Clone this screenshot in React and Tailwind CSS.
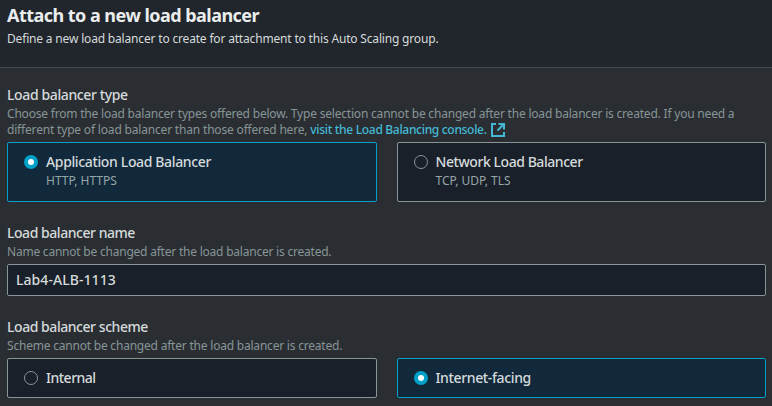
function Radio({ checked }) {
  return checked ? (
    <span className="mt-1 flex size-3.5 shrink-0 items-center justify-center rounded-full bg-[#00a1c9]">
      <span className="size-1.5 rounded-full bg-white" />
    </span>
  ) : (
    <span className="mt-1 size-3.5 shrink-0 rounded-full border border-[#879596] bg-[#1a2029]" />
  );
}

function Tile({ checked, title, titleClass, sub }) {
  return (
    <div
      className={
        checked
          ? "flex flex-1 gap-2 rounded-[2px] border border-[#00a1c9] bg-[#12293b] px-4 py-2"
          : "flex flex-1 gap-2 rounded-[2px] border border-[#879596] bg-[#1a2029] px-4 py-2"
      }
    >
      <Radio checked={checked} />
      <div className="whitespace-nowrap">
        <div className={"text-sm leading-[22px] font-medium text-[#d5dbdb] " + titleClass}>{title}</div>
        {sub && <div className="pb-1 text-xs leading-4 text-[#95a5a6]">{sub}</div>}
      </div>
    </div>
  );
}

function Field({ label, labelClass, hint, children }) {
  return (
    <section>
      <div className={"text-sm leading-[22px] font-medium whitespace-nowrap text-[#d5dbdb] " + labelClass}>{label}</div>
      <div className="mb-1 text-xs leading-4 whitespace-nowrap text-[#879596]">{hint}</div>
      {children}
    </section>
  );
}

function ExternalIcon() {
  return (
    <svg className="ml-1 inline-block size-3.5 align-[-3px]" viewBox="0 0 14 14" fill="none" stroke="#44b9d6" strokeWidth="2">
      <path d="M5 1H1v12h12V9" />
      <path d="M7.5 1H13v5.5" />
      <path d="M13 1L6.5 7.5" />
    </svg>
  );
}

export default function App() {
  return (
    <main className="h-[406px] w-[772px] overflow-hidden bg-[#2a2e33] font-['Noto_Sans','Open_Sans',sans-serif]">
      <header className="h-[68px] border-b border-[#414750] bg-[#21252c] px-[7px] pt-1 whitespace-nowrap">
        <h2 className="text-lg leading-[22px] font-bold tracking-[-0.53px] text-[#eaeded]">Attach to a new load balancer</h2>
        <p className="mt-[5px] text-xs leading-4 tracking-[-0.175px] text-[#d5dbdb]">
          Define a new load balancer to create for attachment to this Auto Scaling group.
        </p>
      </header>
      <div className="flex flex-col gap-5 pt-4 pr-1.5 pl-[7px]">
        <Field
          label="Load balancer type"
          labelClass="tracking-[-0.38px]"
          hint={
            <>
              <div className="tracking-[-0.2px]">
                Choose from the load balancer types offered below. Type selection cannot be changed after the load balancer is created. If you need a
              </div>
              <div className="tracking-[-0.18px]">
                different type of load balancer than those offered here,{" "}
                <a className="font-medium tracking-[-0.31px] text-[#44b9d6]">visit the Load Balancing console.</a>
                <ExternalIcon />
              </div>
            </>
          }
        >
          <div className="flex gap-5">
            <Tile checked title="Application Load Balancer" titleClass="tracking-[-0.36px]" sub="HTTP, HTTPS" />
            <Tile title="Network Load Balancer" titleClass="tracking-[-0.44px]" sub="TCP, UDP, TLS" />
          </div>
        </Field>
        <Field
          label="Load balancer name"
          labelClass="tracking-[-0.46px]"
          hint={<div className="tracking-[-0.22px]">Name cannot be changed after the load balancer is created.</div>}
        >
          <div className="h-8 rounded-[2px] border border-[#879596] bg-[#1a2029] px-2 py-1 text-sm leading-[22px] font-medium tracking-[0.06px] text-[#d5dbdb]">
            Lab4-ALB-1113
          </div>
        </Field>
        <Field
          label="Load balancer scheme"
          labelClass="tracking-[-0.45px]"
          hint={<div className="tracking-[-0.21px]">Scheme cannot be changed after the load balancer is created.</div>}
        >
          <div className="flex gap-5">
            <Tile title="Internal" titleClass="tracking-[-0.5px]" />
            <Tile checked title="Internet-facing" titleClass="tracking-[-0.36px]" />
          </div>
        </Field>
      </div>
    </main>
  );
}
